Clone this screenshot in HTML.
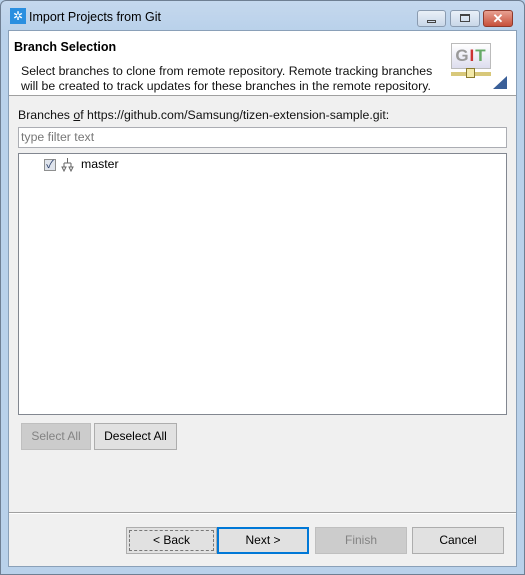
<!DOCTYPE html><html><head><style>
*{margin:0;padding:0;box-sizing:border-box}
body{width:525px;height:575px;background:#b9d1ea;font-family:"Liberation Sans","Noto Sans CJK KR",sans-serif;font-size:12px;color:#000;position:relative;overflow:hidden}
.a{position:absolute}
.btn{position:absolute;border:1px solid #adadad;background:#e1e1e1;text-align:center;line-height:24px;font-size:12px}
.dis{background:#cccccc;border-color:#bfbfbf;color:#838383}
</style></head><body>
<div class="a" style="left:0;top:0;width:525px;height:575px;border:1px solid #6f7f93;border-radius:6px 6px 0 0;background:linear-gradient(#c5d8ee,#b9d1ea 30px)"></div>
<div class="a" style="left:10px;top:8px;width:16px;height:16px;background:#2a8fe0;color:#fff;font-size:12px;line-height:16px;text-align:center">✲</div>
<div class="a" style="left:29px;top:10px;font-size:12.5px">Import Projects from Git</div>
<div class="a" style="left:417px;top:10px;width:29px;height:17px;border:1px solid #8a9bb0;border-radius:3px;background:linear-gradient(#e9f0f8,#c9d7e8)"><div class="a" style="left:9px;top:9px;width:9px;height:3px;border:1px solid #444"></div></div>
<div class="a" style="left:450px;top:10px;width:30px;height:17px;border:1px solid #8a9bb0;border-radius:3px;background:linear-gradient(#e9f0f8,#c9d7e8)"><div class="a" style="left:9px;top:3px;width:10px;height:8px;border:1px solid #444;border-top-width:2px"></div></div>
<div class="a" style="left:483px;top:10px;width:30px;height:17px;border:1px solid #8e3a2c;border-radius:3px;background:linear-gradient(#e8a192,#c7503a);color:#fff;font-weight:bold;text-align:center;line-height:15px;font-size:13px">✕</div>
<div class="a" style="left:8px;top:30px;width:509px;height:537px;background:#f0f0f0;border:1px solid #8aa0b8"></div>
<div class="a" style="left:9px;top:31px;width:507px;height:65px;background:#fff;border-bottom:1px solid #a0a0a0"></div>
<div class="a" style="left:14px;top:40px;font-weight:bold;font-size:12.5px">Branch Selection</div>
<div class="a" style="left:21px;top:64px;line-height:15px;font-size:12.3px;color:#111">Select branches to clone from remote repository. Remote tracking branches<br>will be created to track updates for these branches in the remote repository.</div>
<div class="a" style="left:451px;top:43px;width:40px;height:26px;border:1px solid #bbb;background:linear-gradient(#fff,#dde);font-weight:bold;font-size:17px;line-height:24px;text-align:center;color:#999;letter-spacing:1px">G<span style="color:#c33">I</span><span style="color:#6a6">T</span></div>
<div class="a" style="left:451px;top:72px;width:40px;height:4px;background:#d8c87a"></div>
<div class="a" style="left:466px;top:68px;width:9px;height:10px;border:1px solid #8a7a30;background:#f3e9a8"></div>
<div class="a" style="left:493px;top:76px;width:0;height:0;border-left:14px solid transparent;border-bottom:13px solid #3a5f98"></div>
<div class="a" style="left:18px;top:108px;font-size:12.3px;color:#111">Branches <u>o</u>f https://github.com/Samsung/tizen-extension-sample.git:</div>
<div class="a" style="left:18px;top:127px;width:489px;height:21px;background:#fff;border:1px solid #abadb3;color:#777;padding-left:2px;line-height:18px;font-size:12.3px">type filter text</div>
<div class="a" style="left:18px;top:153px;width:489px;height:262px;background:#fff;border:1px solid #828790"></div>
<div class="a" style="left:44px;top:159px;width:12px;height:12px;border:1px solid #8e8f8f;background:#dfe4ec;color:#2a3f6a;font-size:11px;line-height:10px;text-align:center">✓</div>
<svg class="a" style="left:60px;top:157px" width="15" height="16" viewBox="0 0 15 16"><path d="M7.5 1v5M4 6h7M4 6v4M11 6v4M2 10h4l-2 4zM9 10h4l-2 4z" fill="none" stroke="#666" stroke-width="1"/></svg>
<div class="a" style="left:81px;top:157px;font-size:12.3px">master</div>
<div class="btn dis" style="left:21px;top:423px;width:70px;height:27px">Select All</div>
<div class="btn" style="left:94px;top:423px;width:83px;height:27px">Deselect All</div>
<div class="a" style="left:9px;top:512px;width:507px;height:1px;background:#a0a0a0"></div>
<div class="a" style="left:9px;top:513px;width:507px;height:1px;background:#fff"></div>
<div class="btn" style="left:126px;top:527px;width:91px;height:27px"><div class="a" style="left:2px;top:2px;right:2px;bottom:2px;border:1px dashed #777"></div>&lt; Back</div>
<div class="btn" style="left:217px;top:527px;width:92px;height:27px;border:2px solid #0078d7;line-height:22px">Next &gt;</div>
<div class="btn dis" style="left:315px;top:527px;width:92px;height:27px">Finish</div>
<div class="btn" style="left:412px;top:527px;width:92px;height:27px">Cancel</div>
</body></html>
